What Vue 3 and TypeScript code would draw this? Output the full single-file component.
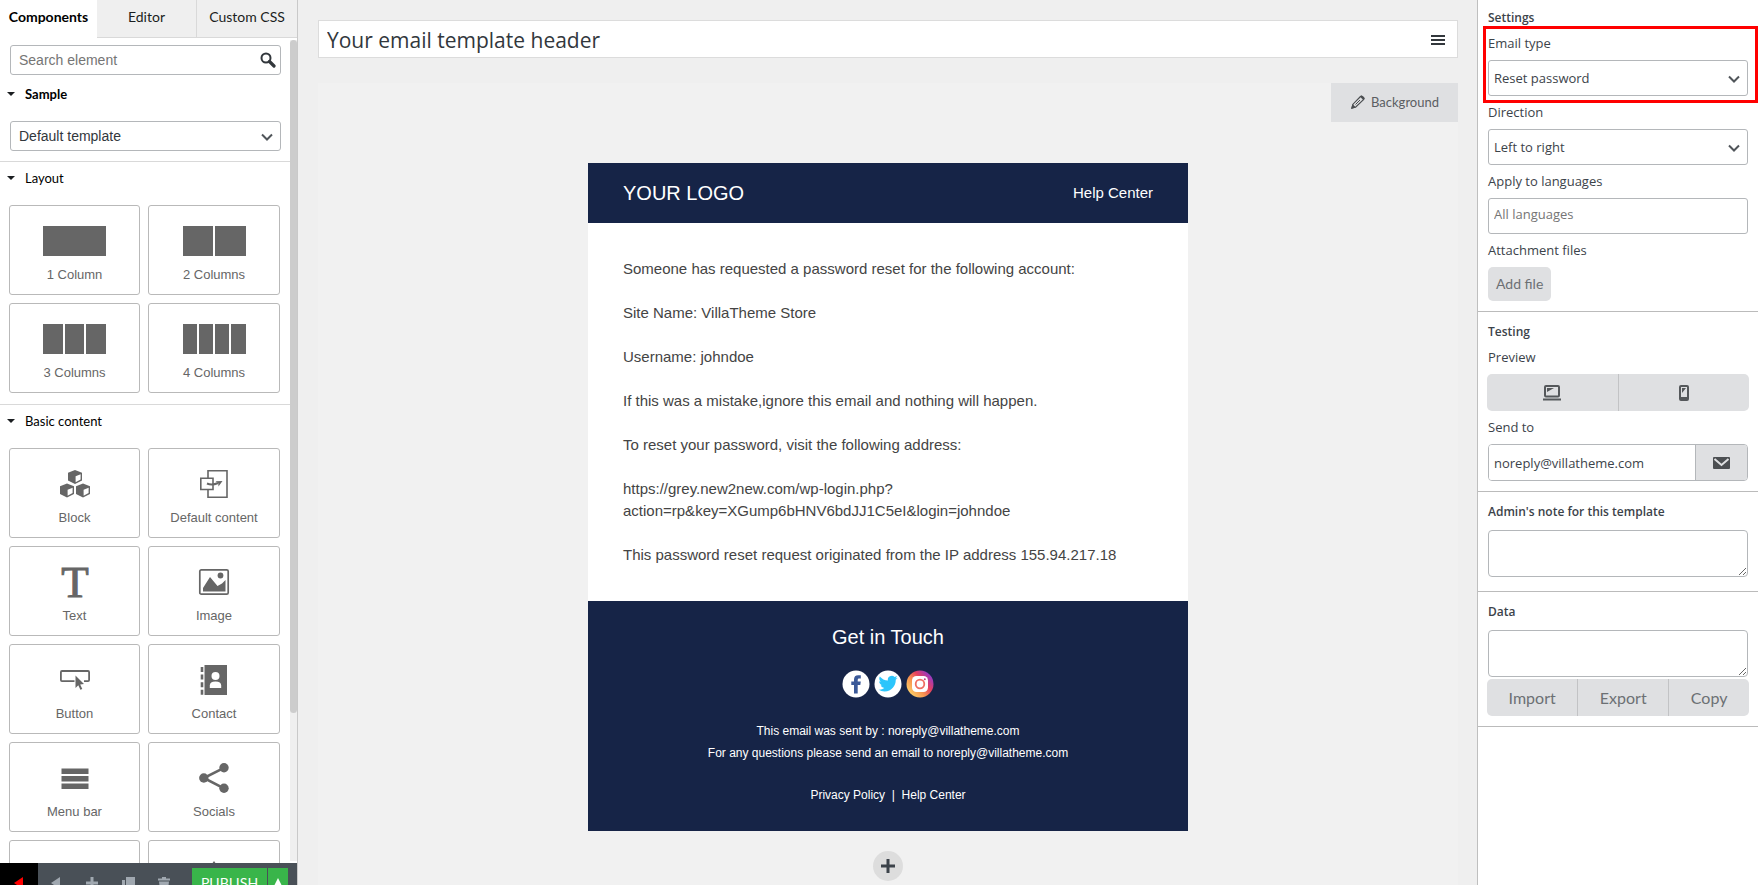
<script setup lang="ts">
import { ref } from 'vue'

interface Card {
  id: string
  label: string
}

const search = ref('')
const sample = ref('Default template')
const subject = ref('Your email template header')
const emailType = ref('Reset password')
const direction = ref('Left to right')
const languages = ref('')
const sendTo = ref('noreply@villatheme.com')
const note = ref('')
const data = ref('')

const layouts: number[] = [1, 2, 3, 4]
const basics: Card[] = [
  { id: 'block', label: 'Block' },
  { id: 'default', label: 'Default content' },
  { id: 'text', label: 'Text' },
  { id: 'image', label: 'Image' },
  { id: 'button', label: 'Button' },
  { id: 'contact', label: 'Contact' },
  { id: 'menu', label: 'Menu bar' },
  { id: 'socials', label: 'Socials' },
  { id: 'divider', label: '' },
  { id: 'spacer', label: '' },
]
const paragraphs: string[] = [
  'Someone has requested a password reset for the following account:',
  'Site Name: VillaTheme Store',
  'Username: johndoe',
  'If this was a mistake,ignore this email and nothing will happen.',
  'To reset your password, visit the following address:',
  'https://grey.new2new.com/wp-login.php?action=rp&key=XGump6bHNV6bdJJ1C5eI&login=johndoe',
  'This password reset request originated from the IP address 155.94.217.18',
]
</script>

<template>
  <div class="app">
    <aside class="left">
      <nav class="tabs">
        <button type="button" class="tab active">Components</button>
        <button type="button" class="tab">Editor</button>
        <button type="button" class="tab last">Custom CSS</button>
      </nav>
      <div class="scroller">
        <div class="list">
          <div class="control search">
            <input v-model="search" type="text" placeholder="Search element" aria-label="Search element" />
            <svg class="glass" viewBox="0 0 16 16" width="16" height="16">
              <circle cx="6" cy="6" r="4.5" fill="none" stroke="#32373c" stroke-width="2" />
              <path d="M9.5 9.5 14 14" stroke="#32373c" stroke-width="3.2" stroke-linecap="round" />
            </svg>
          </div>
          <section class="group">
            <h2 class="group-title strong"><span class="caret"></span>Sample</h2>
            <div class="group-body">
              <div class="control">
                <select v-model="sample" aria-label="Sample"><option>Default template</option></select>
                <svg class="chevron" viewBox="0 0 12 8" width="12" height="8"><path d="M1 1.5 6 6.5 11 1.5" /></svg>
              </div>
            </div>
          </section>
          <section class="group">
            <h2 class="group-title"><span class="caret"></span>Layout</h2>
            <div class="group-body cards">
              <button v-for="n in layouts" :key="n" type="button" class="card">
                <span class="cols"><i v-for="k in n" :key="k"></i></span>
                <span class="card-label">{{ n }} {{ n === 1 ? 'Column' : 'Columns' }}</span>
              </button>
            </div>
          </section>
          <section class="group">
            <h2 class="group-title"><span class="caret"></span>Basic content</h2>
            <div class="group-body cards">
              <button v-for="c in basics" :key="c.id" type="button" class="card" :aria-label="c.label || c.id">
                <svg viewBox="0 0 30 30" width="30" height="30" class="card-icon">
                  <g v-if="c.id === 'block'">
                    <g v-for="p in ['0 0', '-8 13.5', '8 13.5']" :key="p" :transform="`translate(${p})`">
                      <path d="M15 1 22 3.8V11.5L15 15 8 11.5V3.8Z" />
                      <path d="M15.6 7.2 20.6 5.2V10.6L15.6 13.2Z" fill="#fff" />
                    </g>
                  </g>
                  <g v-else-if="c.id === 'default'" fill="none" stroke="#666" stroke-width="1.6">
                    <path d="M9 9V1.8H28V28.2H9V21" />
                    <path d="M1.8 9.3H14V20.5H1.8Z" />
                    <path d="M8 14.5Q13 16.8 19 14" stroke-width="2" />
                    <path d="M16.5 12.2 23.5 12 19.5 17.5 19.2 14Z" fill="#666" stroke="none" />
                  </g>
                  <text v-else-if="c.id === 'text'" class="serif" x="15" y="30" text-anchor="middle">T</text>
                  <g v-else-if="c.id === 'image'">
                    <rect x=".8" y="2.8" width="28.4" height="24.4" rx="1.5" fill="none" stroke="#666" stroke-width="1.7" />
                    <circle cx="21.5" cy="8.5" r="2.9" />
                    <path d="M4 24.5V21L11 10 18.5 19 23 16.5 26.5 13V24.5Z" />
                  </g>
                  <g v-else-if="c.id === 'button'">
                    <path d="M14.5 16.2H2Q.9 16.2.9 15V7.2Q.9 6 2 6H28Q29.1 6 29.1 7.2V15Q29.1 16.2 28 16.2H24" fill="none" stroke="#666" stroke-width="1.8" />
                    <path d="M15.5 10.5V23L18.3 20.3 20.4 24.8 22.3 23.9 20.2 19.5 24 19Z" />
                  </g>
                  <g v-else-if="c.id === 'contact'">
                    <path d="M5.5 0H28V30H5.5Z" />
                    <path d="M3 2V30" fill="none" stroke="#666" stroke-width="2.6" stroke-dasharray="5 2.6" />
                    <circle cx="16.5" cy="11" r="4" fill="#fff" />
                    <path d="M10.8 23V20.5Q10.8 16.5 16.5 16.5T22.2 20.5V23Z" fill="#fff" />
                  </g>
                  <path v-else-if="c.id === 'menu'" d="M1.5 5.5H28.5V11H1.5ZM1.5 13H28.5V18.5H1.5ZM1.5 20.5H28.5V26H1.5Z" />
                  <g v-else-if="c.id === 'socials'">
                    <path d="M25 4.8 4.8 15 25 25.3" fill="none" stroke="#666" stroke-width="2.6" />
                    <circle cx="25" cy="4.8" r="4.7" />
                    <circle cx="4.8" cy="15" r="4.7" />
                    <circle cx="25" cy="25.3" r="4.7" />
                  </g>
                  <path v-else-if="c.id === 'spacer'" d="M15 0 20 7H16V23H20L15 30 10 23H14V7H10Z" />
                  <path v-else d="M1 14H29V17H1Z" />
                </svg>
                <span class="card-label">{{ c.label }}</span>
              </button>
            </div>
          </section>
        </div>
        <div class="track"><div class="thumb"></div></div>
      </div>
      <footer class="actions">
        <button type="button" class="act exit" aria-label="Exit">
          <svg viewBox="0 0 10 12" width="10" height="12"><path d="M9 0V12L0 6Z" fill="#f00" /></svg>
        </button>
        <button type="button" class="act" aria-label="Back">
          <svg viewBox="0 0 10 12" width="10" height="12"><path d="M9 0V12L0 6Z" /></svg>
        </button>
        <button type="button" class="act" aria-label="Add">
          <svg viewBox="0 0 12 12" width="12" height="12"><path d="M4.5 0H7.5V4.5H12V7.5H7.5V12H4.5V7.5H0V4.5H4.5Z" /></svg>
        </button>
        <button type="button" class="act" aria-label="Duplicate">
          <svg viewBox="0 0 13 13" width="13" height="13"><path d="M4 0H13V10H4ZM0 3H3V11H10V13H0Z" /></svg>
        </button>
        <button type="button" class="act" aria-label="Delete">
          <svg viewBox="0 0 12 13" width="12" height="13"><path d="M4 0H8V1.5H12V3.5H0V1.5H4ZM1 4.5H11L10 13H2Z" /></svg>
        </button>
        <span class="publish">
          <button type="button" class="go">PUBLISH</button>
          <button type="button" class="more" aria-label="More">
            <svg viewBox="0 0 10 10" width="10" height="10"><path d="M5 0 10 10H0Z" fill="#fff" /></svg>
          </button>
        </span>
      </footer>
    </aside>

    <main class="main">
      <div class="subject">
        <input v-model="subject" type="text" aria-label="Email subject" />
        <button type="button" class="burger" aria-label="Menu">
          <svg viewBox="0 0 14 10" width="14" height="10"><path d="M0 0H14V2H0ZM0 4H14V6H0ZM0 8H14V10H0Z" fill="#32373c" /></svg>
        </button>
      </div>
      <div class="canvas">
        <button type="button" class="background">
          <svg viewBox="0 0 14 14" width="14" height="14">
            <path d="M1 13 2 9.2 9.5 1.5Q10.5.6 11.6 1.6L12.5 2.5Q13.5 3.6 12.5 4.6L4.8 12Z" fill="none" stroke="#4c4f52" stroke-width="1.2" />
            <path d="M8.8 1.5 10.4.4 13.6 3.5 12.5 5.2ZM0 14 1.5 9 5 12.5Z" fill="#4c4f52" />
            <path d="M4.5 9.5 9 5" stroke="#4c4f52" />
          </svg>
          <span>Background</span>
        </button>
        <article class="email">
          <header class="email-head">
            <span class="logo">YOUR LOGO</span>
            <a href="#help">Help Center</a>
          </header>
          <div class="email-body">
            <p v-for="p in paragraphs" :key="p">{{ p }}</p>
          </div>
          <footer class="email-foot">
            <h3>Get in Touch</h3>
            <div class="social">
              <a href="#facebook" aria-label="Facebook">
                <svg viewBox="0 0 28 28" width="28" height="28">
                  <circle cx="14" cy="14" r="13.5" fill="#fff" />
                  <path d="M12 23.5V15H9.3V11.5H12V9.5Q12 5.2 16.2 5.2H18.8V8.6H17Q15.7 8.6 15.7 10V11.5H18.8L18.3 15H15.7V23.5Z" fill="#3b5998" />
                </svg>
              </a>
              <a href="#twitter" aria-label="Twitter">
                <svg viewBox="0 0 28 28" width="28" height="28">
                  <circle cx="14" cy="14" r="13.5" fill="#fff" />
                  <path transform="translate(4.5 4) scale(.8)" d="M23.95 4.57a10 10 0 0 1-2.82.78 4.96 4.96 0 0 0 2.16-2.73c-.95.55-2 .95-3.13 1.18a4.92 4.92 0 0 0-8.38 4.48C7.69 8.1 4.07 6.13 1.64 3.16a4.82 4.82 0 0 0-.67 2.48c0 1.7.87 3.21 2.19 4.1a4.9 4.9 0 0 1-2.23-.62v.06a4.92 4.92 0 0 0 3.95 4.83 5 5 0 0 1-2.21.08 4.94 4.94 0 0 0 4.6 3.42A9.87 9.87 0 0 1 0 19.54a14 14 0 0 0 7.55 2.21c9.05 0 14-7.5 14-13.98 0-.21 0-.42-.02-.63a9.94 9.94 0 0 0 2.46-2.55z" fill="#2cc5fb" />
                </svg>
              </a>
              <a href="#instagram" aria-label="Instagram">
                <svg viewBox="0 0 28 28" width="28" height="28">
                  <defs>
                    <linearGradient id="insta" x1="0.1" y1="0.85" x2="0.9" y2="0.15">
                      <stop offset="0" stop-color="#fdd06a" />
                      <stop offset="0.35" stop-color="#f8964f" />
                      <stop offset="0.65" stop-color="#e4405f" />
                      <stop offset="1" stop-color="#8f39ce" />
                    </linearGradient>
                  </defs>
                  <circle cx="14" cy="14" r="13.5" fill="url(#insta)" />
                  <rect x="6" y="6" width="16" height="16" rx="4.5" fill="#fff" />
                  <circle cx="14" cy="14" r="4.3" fill="none" stroke="#ee6f62" stroke-width="1.8" />
                  <circle cx="18.8" cy="9.2" r="1" fill="#c13584" />
                </svg>
              </a>
            </div>
            <p>This email was sent by : <a href="#mail">noreply@villatheme.com</a></p>
            <p>For any questions please send an email to <a href="#mail">noreply@villatheme.com</a></p>
            <p class="links"><a href="#privacy">Privacy Policy</a>&nbsp; |&nbsp; <a href="#help">Help Center</a></p>
          </footer>
        </article>
        <button type="button" class="add-row" aria-label="Add row">
          <svg viewBox="0 0 14 14" width="14" height="14"><path d="M5.5 0H8.5V5.5H14V8.5H8.5V14H5.5V8.5H0V5.5H5.5Z" fill="#3c434a" /></svg>
        </button>
      </div>
    </main>

    <aside class="right">
      <section class="panel first">
        <h2>Settings</h2>
        <div class="field marked">
          <label for="type">Email type</label>
          <div class="control">
            <select id="type" v-model="emailType"><option>Reset password</option></select>
            <svg class="chevron" viewBox="0 0 12 8" width="12" height="8"><path d="M1 1.5 6 6.5 11 1.5" /></svg>
          </div>
        </div>
        <div class="field">
          <label for="direction">Direction</label>
          <div class="control">
            <select id="direction" v-model="direction"><option>Left to right</option></select>
            <svg class="chevron" viewBox="0 0 12 8" width="12" height="8"><path d="M1 1.5 6 6.5 11 1.5" /></svg>
          </div>
        </div>
        <div class="field">
          <label for="languages">Apply to languages</label>
          <div class="control">
            <input id="languages" v-model="languages" type="text" placeholder="All languages" />
          </div>
        </div>
        <div class="field">
          <label for="add-file">Attachment files</label>
          <button id="add-file" type="button" class="add-file">Add file</button>
        </div>
      </section>
      <section class="panel">
        <h2>Testing</h2>
        <div class="field">
          <span class="label">Preview</span>
          <div class="segments even">
            <button type="button" aria-label="Desktop preview">
              <svg viewBox="0 0 18 16" width="18" height="16">
                <rect x="2" y="1" width="14" height="10.5" rx="1" fill="none" stroke="#55585b" stroke-width="2" />
                <path d="M4 3H11L4 7ZM0 13.5H18V15.5H0Z" fill="#55585b" />
              </svg>
            </button>
            <button type="button" aria-label="Mobile preview">
              <svg viewBox="0 0 10 16" width="10" height="16">
                <rect x="1" y="1" width="8" height="14" rx="1" fill="none" stroke="#55585b" stroke-width="2" />
                <path d="M3 3H7L3 8ZM1 12H9V15H1Z" fill="#55585b" />
              </svg>
            </button>
          </div>
        </div>
        <div class="field">
          <label for="send">Send to</label>
          <div class="send">
            <input id="send" v-model="sendTo" type="text" />
            <button type="button" aria-label="Send test email">
              <svg viewBox="0 0 17 12" width="17" height="12">
                <rect width="17" height="12" rx="1" fill="#4c4f52" />
                <path d="M1.5 2 8.5 8 15.5 2" fill="none" stroke="#dfe0e2" stroke-width="2" />
              </svg>
            </button>
          </div>
        </div>
      </section>
      <section class="panel notes">
        <h2><label for="note">Admin's note for this template</label></h2>
        <textarea id="note" v-model="note"></textarea>
      </section>
      <section class="panel">
        <h2><label for="data">Data</label></h2>
        <textarea id="data" v-model="data"></textarea>
        <div class="segments">
          <button type="button">Import</button>
          <button type="button">Export</button>
          <button type="button">Copy</button>
        </div>
      </section>
    </aside>
  </div>
</template>

<style>
body {
  margin: 0;
  overflow: hidden;
}
</style>

<style scoped>
.app {
  display: grid;
  grid-template-columns: 298px minmax(0, 1fr) 286px;
  height: 100vh;
  background: #efefef;
  overflow: hidden;
}
* {
  box-sizing: border-box;
}
button,
input,
select,
textarea {
  margin: 0;
  font: inherit;
  color: inherit;
}
button {
  padding: 0;
  border: 0;
  background: none;
  cursor: pointer;
}
svg {
  display: block;
  flex: none;
}
h2,
h3,
p {
  margin: 0;
  font-weight: normal;
}

/* left panel */
.left {
  display: flex;
  flex-direction: column;
  min-height: 0;
  background: #fff;
  border-right: 1px solid #c9c9c9;
  font: 14px/20px Lato, sans-serif;
  color: #1b1e21;
}
.tabs {
  display: grid;
  grid-template-columns: 97px 100px 1fr;
  height: 38px;
}
.tab {
  padding-bottom: 4px;
  background: #efefef;
  border-right: 1px solid #d9d9d9;
  border-bottom: 1px solid #d9d9d9;
}
.tab.active {
  background: #fff;
  border: 0;
  font-weight: bold;
  color: #000;
}
.tab.last {
  border-right: 0;
}
.scroller {
  flex: 1;
  min-height: 0;
  display: flex;
  overflow: hidden;
}
.list {
  flex: 1;
  padding-top: 7px;
}
.track {
  width: 7px;
  margin: 2px 0;
  background: #efefef;
}
.thumb {
  height: 82%;
  border-radius: 4px;
  background: #ccc;
}
.control {
  position: relative;
}
.control input,
.control select {
  display: block;
  width: 100%;
  padding: 0 8px;
  appearance: none;
  background: #fff;
  border: 1px solid #b4b7ba;
  border-radius: 3px;
  outline: 0;
}
.left .control input,
.left .control select {
  height: 30px;
  font-family: "Liberation Sans", Arial, sans-serif;
  color: #32373c;
}
.control input::placeholder {
  color: #757575;
  opacity: 1;
}
.search {
  margin: 0 9px 3px 10px;
}
.glass {
  position: absolute;
  right: 5px;
  top: 7px;
}
.chevron {
  position: absolute;
  right: 8px;
  top: 50%;
  margin-top: -3px;
  fill: none;
  stroke: #50555a;
  stroke-width: 2;
  pointer-events: none;
}
.group + .group {
  border-top: 1px solid #d9d9d9;
}
.group-title {
  display: flex;
  align-items: center;
  height: 34px;
  padding: 0 0 2px 7px;
  font-size: 13px;
  color: #000;
}
.group-title.strong {
  font-weight: bold;
}
.caret {
  width: 8px;
  margin-right: 10px;
  border: 4px solid transparent;
  border-top-color: #1b1e21;
  border-bottom: 0;
}
.group-body {
  padding: 9px 9px 10px 10px;
}
.cards {
  display: grid;
  grid-template-columns: 131fr 132fr;
  gap: 8px;
  padding: 9px 10px 11px 9px;
}
.card {
  display: flex;
  flex-direction: column;
  align-items: center;
  height: 90px;
  padding-top: 20px;
  background: #fff;
  border: 1px solid #b9b9b9;
  border-radius: 3px;
  font: 13px/20px "Liberation Sans", Arial, sans-serif;
  color: #666;
}
.card-icon {
  fill: #666;
  overflow: visible;
}
.card-label {
  margin-top: 9px;
}
.cols {
  display: flex;
  gap: 2px;
  width: 63px;
  height: 30px;
}
.cols i {
  flex: 1;
  background: #666;
}
.serif {
  font: 45px "Liberation Serif", "Times New Roman", serif;
  stroke: #666;
  stroke-width: 1;
}
.actions {
  display: flex;
  height: 22px;
  overflow: hidden;
  background: #495057;
}
.act {
  display: flex;
  align-items: center;
  justify-content: center;
  width: 36px;
  height: 40px;
  fill: #a0a8b0;
}
.act.exit {
  width: 38px;
  background: #000;
}
.publish {
  display: flex;
  gap: 1px;
  height: 30px;
  margin: 5px 9px 0 auto;
  color: #fff;
}
.publish button {
  background: #39b54a;
}
.go {
  width: 75px;
}
.more {
  display: flex;
  align-items: center;
  justify-content: center;
  width: 20px;
}

/* centre */
.main {
  display: flex;
  flex-direction: column;
  gap: 25px;
  min-height: 0;
  padding: 20px 19px 0 20px;
}
.subject {
  display: flex;
  flex: none;
  height: 38px;
  padding-top: 2px;
  background: #fff;
  border: 1px solid #dcdcdc;
}
.subject input {
  flex: 1;
  min-width: 0;
  padding: 0 8px;
  border: 0;
  outline: 0;
  background: none;
  font: 21px "Open Sans", sans-serif;
  color: #32373c;
}
.burger {
  padding: 0 12px;
}
.canvas {
  flex: 1;
  display: flex;
  flex-direction: column;
  align-items: center;
  background: #f1f1f1;
  overflow: hidden;
}
.background {
  display: flex;
  flex: none;
  align-self: flex-end;
  justify-content: flex-end;
  align-items: center;
  gap: 6px;
  width: 127px;
  height: 39px;
  padding: 0 19px 2px 0;
  background: #dfe0e2;
  font: 13px/20px Lato, sans-serif;
  color: #5b5e62;
}
.email {
  flex: none;
  width: 600px;
  max-width: 100%;
  margin-top: 41px;
  font: 15px/22px "Liberation Sans", Arial, sans-serif;
}
.email a {
  color: inherit;
  text-decoration: none;
}
.email-head {
  display: flex;
  align-items: center;
  justify-content: space-between;
  height: 60px;
  padding: 0 35px;
  background: #162447;
  color: #fff;
}
.logo {
  font-size: 20px;
}
.email-body {
  display: flex;
  flex-direction: column;
  gap: 22px;
  padding: 35px;
  background: #fff;
  color: #444;
}
.email-foot {
  padding: 25px 35px;
  background: #162447;
  color: #fff;
  font-size: 12px;
  text-align: center;
}
.email-foot h3 {
  font-size: 20px;
}
.social {
  display: flex;
  justify-content: center;
  gap: 4px;
  margin: 22px 0;
}
.email-foot .links {
  margin-top: 20px;
}
.add-row {
  display: grid;
  place-items: center;
  flex: none;
  width: 30px;
  height: 30px;
  margin-top: 20px;
  border-radius: 50%;
  background: #ddd;
}

/* right panel */
.right {
  padding-right: 5px;
  background: #fff;
  border-left: 1px solid #bfbfbf;
  font: 13px/20px "Open Sans", sans-serif;
  color: #3c434a;
}
.panel {
  padding: 10px;
  border-bottom: 1px solid #bbb;
}
.panel.first {
  padding-top: 8px;
}
.panel.notes {
  padding-bottom: 14px;
}
.panel h2 {
  font-size: 12px;
  font-weight: 600;
  line-height: 20px;
}
.field + .field {
  margin-top: 1px;
}
.field > label,
.label {
  display: block;
  padding-bottom: 2px;
  line-height: 30px;
}
.right .control input,
.right .control select {
  height: 36px;
  padding: 0 5px;
}
.right .control input {
  padding: 0 5px 4px;
}
.marked {
  position: relative;
}
.marked::after {
  content: "";
  position: absolute;
  inset: -2px -10px -7px -5px;
  border: 3px solid #f00;
  pointer-events: none;
}
.add-file {
  display: block;
  height: 34px;
  padding: 0 8px;
  border-radius: 5px;
  background: #dfe0e2;
  font: 14px/20px Lato, sans-serif;
  color: #6c7074;
}
.segments {
  display: flex;
  height: 37px;
  margin: 0 -1px;
  border-radius: 5px;
  background: #dfe0e2;
  overflow: hidden;
  font: 16px/20px Lato, sans-serif;
  color: #6c7074;
}
.segments button {
  display: flex;
  align-items: center;
  justify-content: center;
  flex: 1 1 auto;
}
.segments.even button {
  flex: 1 1 0;
}
.segments button + button {
  border-left: 1px solid #c2c3c5;
}
.send {
  display: flex;
  height: 37px;
  border: 1px solid #b4b7ba;
  border-radius: 4px;
  overflow: hidden;
}
.send input {
  flex: 1;
  min-width: 0;
  padding: 0 5px;
  border: 0;
  outline: 0;
}
.send button {
  display: grid;
  place-items: center;
  width: 52px;
  border-left: 1px solid #b4b7ba;
  background: #dfe0e2;
}
textarea {
  display: block;
  width: 100%;
  height: 47px;
  margin: 8px 0 2px;
  border: 1px solid #b4b7ba;
  border-radius: 4px;
  outline: 0;
}
.notes textarea {
  margin-bottom: 0;
}
</style>
